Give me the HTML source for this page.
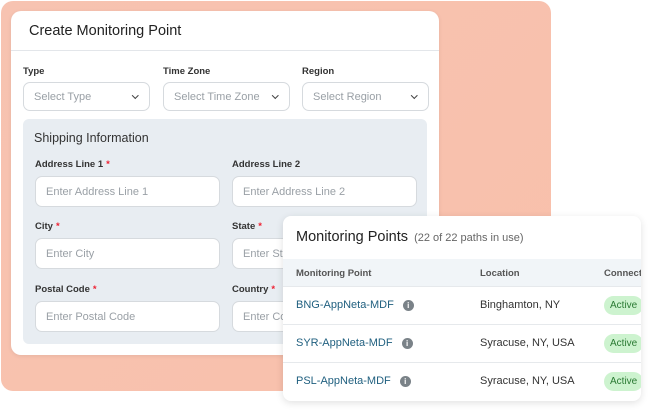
<!DOCTYPE html>
<html><head><style>
*{box-sizing:border-box;margin:0;padding:0}
body{width:654px;height:414px;background:#fff;position:relative;overflow:hidden;font-family:"Liberation Sans",sans-serif}
.peach{position:absolute;left:1px;top:1px;width:550px;height:390px;border-radius:12px;background:linear-gradient(135deg,#f7c3b1,#f9c0ab)}
.card{position:absolute;left:11px;top:11px;width:428px;height:344px;background:#fff;border-radius:10px;box-shadow:0 1px 4px rgba(0,0,0,.08)}
.title{position:absolute;left:18px;top:12px;font-size:14.5px;color:#222}
.hl{position:absolute;left:0;right:0;top:39px;border-top:1px solid #e3e6ea}
.lbl{position:absolute;font-size:9.5px;font-weight:bold;color:#333}
.lbl i{color:#e23;font-style:normal;margin-left:3px}
.in{position:absolute;background:#fff;border:1px solid #d6dade;border-radius:7px;font-size:11px;color:#9aa0a6;padding-left:10px;display:flex;align-items:center}
.sel::after{content:"";position:absolute;right:12px;top:10px;width:3.5px;height:3.5px;border-right:1.2px solid #444;border-bottom:1.2px solid #444;transform:rotate(45deg)}
.panel{position:absolute;left:12px;top:108px;width:404px;height:225px;background:#e8edf2;border-radius:6px}
.tbl{position:absolute;left:283px;top:216px;width:358px;height:185px;background:#fff;border-radius:8px;box-shadow:0 2px 8px rgba(0,0,0,.12);overflow:hidden}
.th{position:absolute;left:0;right:0;top:43px;height:28px;background:#f1f5f8;border-bottom:1px solid #e6e9ec}
.tt{position:absolute;font-size:9.5px;font-weight:bold;color:#555;top:52px}
.row{position:absolute;left:0;right:0;height:38px;border-bottom:1px solid #e6e9ec}
.row span{position:absolute;top:12px;font-size:11px}
.nm{left:13px;color:#1f5f7f}
.nm b{display:inline-block;width:11px;height:11px;border-radius:50%;background:#7a8288;color:#fff;font-size:8px;text-align:center;line-height:11px;margin-left:9px;vertical-align:0}
.loc{left:197px;color:#333}
.act{left:321px;top:9px!important;background:#cdf3cf;color:#2a7a33;font-size:10px!important;padding:4px 6px;border-radius:10px}
</style></head><body>
<div class="peach"></div>
<div class="card">
<div class="title">Create Monitoring Point</div>
<div class="hl"></div>
<div class="lbl" style="left:12px;top:55px">Type</div>
<div class="lbl" style="left:152px;top:55px">Time Zone</div>
<div class="lbl" style="left:291px;top:55px">Region</div>
<div class="in sel" style="left:12px;top:71px;width:127px;height:29px">Select Type</div>
<div class="in sel" style="left:152px;top:71px;width:127px;height:29px">Select Time Zone</div>
<div class="in sel" style="left:291px;top:71px;width:127px;height:29px">Select Region</div>
<div class="panel">
<div style="position:absolute;left:11px;top:12px;font-size:12.5px;color:#333">Shipping Information</div>
<div class="lbl" style="left:12px;top:40px">Address Line 1<i>*</i></div>
<div class="lbl" style="left:209px;top:40px">Address Line 2</div>
<div class="in" style="left:12px;top:57px;width:185px;height:31px">Enter Address Line 1</div>
<div class="in" style="left:209px;top:57px;width:185px;height:31px">Enter Address Line 2</div>
<div class="lbl" style="left:12px;top:102px">City<i>*</i></div>
<div class="lbl" style="left:209px;top:102px">State<i>*</i></div>
<div class="in" style="left:12px;top:119px;width:185px;height:31px">Enter City</div>
<div class="in" style="left:209px;top:119px;width:185px;height:31px">Enter State</div>
<div class="lbl" style="left:12px;top:165px">Postal Code<i>*</i></div>
<div class="lbl" style="left:209px;top:165px">Country<i>*</i></div>
<div class="in" style="left:12px;top:182px;width:185px;height:31px">Enter Postal Code</div>
<div class="in" style="left:209px;top:182px;width:185px;height:31px">Enter Country</div>
</div>
</div>
<div class="tbl">
<div style="position:absolute;left:13px;top:13px;font-size:14.5px;color:#222">Monitoring Points <span style="font-size:11px;color:#666;margin-left:2px">(22 of 22 paths in use)</span></div>
<div class="th"></div>
<div class="tt" style="left:13px">Monitoring Point</div>
<div class="tt" style="left:197px">Location</div>
<div class="tt" style="left:321px;white-space:nowrap">Connection</div>
<div class="row" style="top:71px"><span class="nm">BNG-AppNeta-MDF<b>i</b></span><span class="loc">Binghamton, NY</span><span class="act">Active</span></div>
<div class="row" style="top:109px"><span class="nm">SYR-AppNeta-MDF<b>i</b></span><span class="loc">Syracuse, NY, USA</span><span class="act">Active</span></div>
<div class="row" style="top:147px;border:0"><span class="nm">PSL-AppNeta-MDF<b>i</b></span><span class="loc">Syracuse, NY, USA</span><span class="act">Active</span></div>
</div>
</body></html>
